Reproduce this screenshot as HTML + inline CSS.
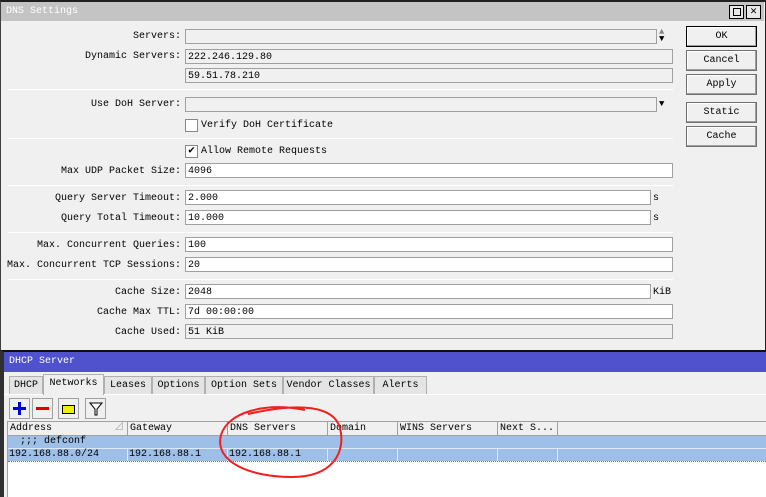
<!DOCTYPE html>
<html><head><meta charset="utf-8"><style>
*{box-sizing:border-box;margin:0;padding:0}
body{width:766px;height:497px;overflow:hidden;background:#f0f0f0;font:10px "Liberation Mono","Noto Sans CJK SC",monospace;color:#000;position:relative}
.a{position:absolute}
.lbl{position:absolute;right:585px;text-align:right;white-space:nowrap;line-height:15px}
.in{position:absolute;left:185px;height:15px;border:1px solid #a0a0a0;background:#fff;padding-left:2px;padding-top:1px;line-height:13px;white-space:nowrap}
.ro{background:#f0f0f0}
.sep{position:absolute;left:8px;width:665px;height:1px;background:#b4b4b4;border-bottom:1px solid #fff}
.btn{position:absolute;left:686px;width:71px;height:21px;border:1px solid #707070;background:#f0f0f0;text-align:center;line-height:19px;box-shadow:inset -1px -1px 0 #a0a0a0,inset 1px 1px 0 #fff}
.cb{position:absolute;left:185px;width:13px;height:13px;border:1px solid #888;background:#fff}
.tab{position:absolute;top:376px;height:18px;border:1px solid #b0b0b0;border-bottom:none;background:#e4e4e4;text-align:center;line-height:17px}
.tb{position:absolute;top:398px;width:21px;height:21px;border:1px solid #a0a0a0;background:#f0f0f0}
.th{position:absolute;top:421px;height:15px;border-right:1px solid #a0a0a0;line-height:15px;padding-left:2px;white-space:nowrap}
.td{position:absolute;top:449px;height:12px;border-right:1px solid #e0e8f4;line-height:12px;padding-left:1px;white-space:nowrap}
</style></head><body>
<div class="a" style="left:0;top:0;width:766px;height:352px;border:1px solid #202020;border-top:2px solid #202020;border-left:1px solid #404040"></div>
<div class="a" style="left:1px;top:2px;width:763px;height:19px;background:#c4c4c4;color:#fff;line-height:19px;padding-left:5px">DNS Settings</div>
<div class="a" style="left:729px;top:5px;width:15px;height:14px;border:1px solid #000;background:#e8e8e8"><div style="position:absolute;left:3px;top:2px;width:8px;height:8px;border:1px solid #000"></div></div>
<div class="a" style="left:746px;top:5px;width:15px;height:14px;border:1px solid #000;background:#e8e8e8;text-align:center;line-height:12px;font-weight:bold;font-size:11px">✕</div>

<div class="lbl" style="top:29px">Servers:</div><div class="in ro" style="top:29px;width:472px"></div>
<div class="a" style="left:659px;top:29px;font-size:9px;line-height:7px;color:#888">▲</div><div class="a" style="left:659px;top:36px;font-size:9px;line-height:7px">▼</div>
<div class="lbl" style="top:49px">Dynamic Servers:</div><div class="in ro" style="top:49px;width:488px">222.246.129.80</div>
<div class="in ro" style="top:68px;width:488px">59.51.78.210</div>
<div class="sep" style="top:89px"></div>
<div class="lbl" style="top:97px">Use DoH Server:</div><div class="in ro" style="top:97px;width:472px"></div>
<div class="a" style="left:659px;top:99px;font-size:9px">▼</div>
<div class="cb" style="top:119px"></div><div class="a" style="left:201px;top:118px;line-height:15px">Verify DoH Certificate</div>
<div class="sep" style="top:138px"></div>
<div class="cb" style="top:145px;text-align:center;line-height:11px;font-size:11px">✔</div><div class="a" style="left:201px;top:144px;line-height:15px">Allow Remote Requests</div>
<div class="lbl" style="top:164px">Max UDP Packet Size:</div><div class="in" style="top:163px;width:488px">4096</div>
<div class="sep" style="top:185px"></div>
<div class="lbl" style="top:191px">Query Server Timeout:</div><div class="in" style="top:190px;width:466px">2.000</div><div class="a" style="left:653px;top:191px;line-height:15px">s</div>
<div class="lbl" style="top:211px">Query Total Timeout:</div><div class="in" style="top:210px;width:466px">10.000</div><div class="a" style="left:653px;top:211px;line-height:15px">s</div>
<div class="sep" style="top:232px"></div>
<div class="lbl" style="top:238px">Max. Concurrent Queries:</div><div class="in" style="top:237px;width:488px">100</div>
<div class="lbl" style="top:258px">Max. Concurrent TCP Sessions:</div><div class="in" style="top:257px;width:488px">20</div>
<div class="sep" style="top:279px"></div>
<div class="lbl" style="top:285px">Cache Size:</div><div class="in" style="top:284px;width:466px">2048</div><div class="a" style="left:653px;top:285px;line-height:15px">KiB</div>
<div class="lbl" style="top:305px">Cache Max TTL:</div><div class="in" style="top:304px;width:488px">7d 00:00:00</div>
<div class="lbl" style="top:325px">Cache Used:</div><div class="in ro" style="top:324px;width:488px">51 KiB</div>

<div class="btn" style="top:26px;border:1px solid #000">OK</div>
<div class="btn" style="top:50px">Cancel</div>
<div class="btn" style="top:74px">Apply</div>
<div class="btn" style="top:102px">Static</div>
<div class="btn" style="top:126px">Cache</div>

<div class="a" style="left:0;top:350px;width:766px;height:147px;border-top:2px solid #101010;border-left:4px solid #303030"></div>
<div class="a" style="left:4px;top:352px;width:762px;height:20px;background:#4f52cc;color:#fff;line-height:20px;padding-left:5px">DHCP Server</div>
<div class="a" style="left:4px;top:394px;width:762px;height:1px;background:#fff"></div>
<div class="tab" style="left:9px;width:34px">DHCP</div>
<div class="tab" style="left:43px;top:374px;height:21px;width:61px;background:#f0f0f0">Networks</div>
<div class="tab" style="left:104px;width:48px">Leases</div>
<div class="tab" style="left:152px;width:53px">Options</div>
<div class="tab" style="left:205px;width:78px">Option Sets</div>
<div class="tab" style="left:283px;width:91px">Vendor Classes</div>
<div class="tab" style="left:374px;width:53px">Alerts</div>
<div class="tb" style="left:9px"><div class="a" style="left:8px;top:3px;width:3px;height:13px;background:#0000e0"></div><div class="a" style="left:3px;top:8px;width:13px;height:3px;background:#0000e0"></div></div>
<div class="tb" style="left:32px"><div class="a" style="left:3px;top:8px;width:13px;height:3px;background:#e00000"></div></div>
<div class="tb" style="left:58px"><div class="a" style="left:3px;top:6px;width:13px;height:9px;background:#f0f000;border:1px solid #000"></div></div>
<div class="tb" style="left:85px"><svg class="a" style="left:3px;top:3px" width="14" height="14"><path d="M1 1H13L8 7V13L6 13V7Z" fill="#fff" stroke="#000"/></svg></div>

<div class="a" style="left:7px;top:421px;width:759px;height:76px;background:#fff;border-left:1px solid #a0a0a0"></div>
<div class="a" style="left:8px;top:421px;width:758px;height:15px;background:#f0f0f0;border-top:1px solid #a0a0a0;border-bottom:1px solid #a0a0a0"></div>
<div class="th" style="left:8px;width:120px">Address<span style="position:absolute;right:3px;color:#aaa">⊿</span></div>
<div class="th" style="left:128px;width:100px">Gateway</div>
<div class="th" style="left:228px;width:100px">DNS Servers</div>
<div class="th" style="left:328px;width:70px">Domain</div>
<div class="th" style="left:398px;width:100px">WINS Servers</div>
<div class="th" style="left:498px;width:60px">Next S...</div>
<div class="a" style="left:8px;top:436px;width:758px;height:25px;background:#9dbfe8"></div>
<div class="a" style="left:8px;top:448px;width:758px;height:1px;background:#e0e8f4"></div>
<div class="a" style="left:8px;top:461px;width:758px;height:1px;border-top:1px dotted #777"></div>
<div class="a" style="left:20px;top:436px;line-height:12px">;;; defconf</div>
<div class="td" style="left:8px;width:120px">192.168.88.0/24</div>
<div class="td" style="left:128px;width:100px">192.168.88.1</div>
<div class="td" style="left:228px;width:100px">192.168.88.1</div>
<div class="td" style="left:328px;width:70px"></div>
<div class="td" style="left:398px;width:100px"></div>
<div class="td" style="left:498px;width:60px"></div>

<svg class="a" style="left:0;top:0" width="766" height="497"><path d="M305 410 C265 402 228 412 221 435 C214 462 250 477 292 477 C333 477 346 452 340 428 C334 406 300 402 248 414" fill="none" stroke="#f02020" stroke-width="2"/></svg>
</body></html>
